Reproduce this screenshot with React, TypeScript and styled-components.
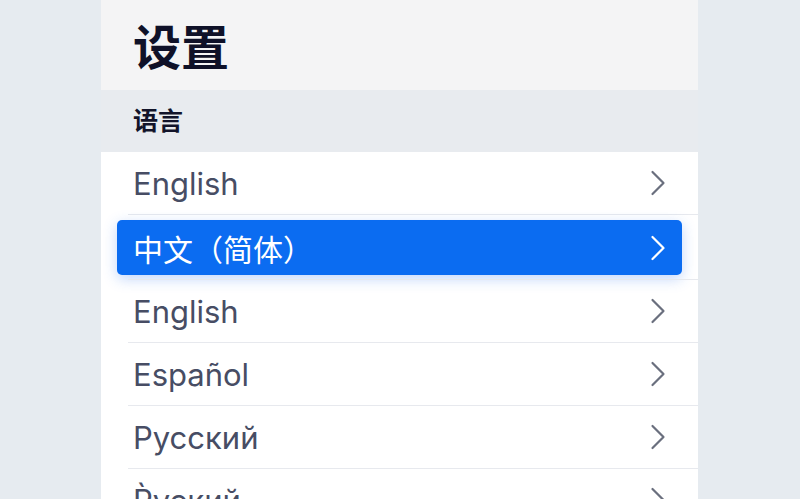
import React from 'react';
import styled, { createGlobalStyle } from 'styled-components';

const GlobalStyle = createGlobalStyle`
  html, body {
    margin: 0;
    padding: 0;
    background: #e6ebf0;
    font-family: Inter, "Noto Sans", "Noto Sans CJK SC", sans-serif;
    overflow: hidden;
  }
`;

type Language = {
  label: string;
  selected?: boolean;
};

const languages: Language[] = [
  { label: 'English' },
  { label: '中文（简体）', selected: true },
  { label: 'English' },
  { label: 'Español' },
  { label: 'Русский' },
  { label: 'Р̀уский' },
];

const Chevron = ({ light }: { light?: boolean }) => (
  <ChevronSvg viewBox="0 0 16 26" fill="none">
    <path
      d="M2.5 2 L13.5 13 L2.5 24"
      stroke={light ? '#ffffff' : '#6a6f7e'}
      strokeWidth="2.2"
      strokeLinecap="round"
      strokeLinejoin="round"
    />
  </ChevronSvg>
);

export default function App() {
  return (
    <>
      <GlobalStyle />
      <Page>
        <Panel>
          <Header>
            <Title>设置</Title>
          </Header>
          <Section>
            <SectionTitle>语言</SectionTitle>
          </Section>
          <List>
            {languages.map((lang, i) =>
              lang.selected ? (
                <SelectedWrap key={i}>
                  <SelectedRow>
                    <SelectedLabel>{lang.label}</SelectedLabel>
                    <Chevron light />
                  </SelectedRow>
                </SelectedWrap>
              ) : (
                <Row key={i}>
                  <Label>{lang.label}</Label>
                  <Chevron />
                </Row>
              )
            )}
          </List>
        </Panel>
      </Page>
    </>
  );
}

const Page = styled.div`
  height: 499px;
  overflow: hidden;
  display: flex;
  padding-left: 101px;
`;

const Panel = styled.div`
  width: 597px;
  display: flex;
  flex-direction: column;
`;

const Header = styled.div`
  height: 90px;
  flex-shrink: 0;
  background: #f4f4f5;
  display: flex;
  align-items: center;
  padding-left: 32px;
`;

const Title = styled.h1`
  margin: 0;
  font-family: "Noto Sans CJK SC", sans-serif;
  font-weight: 700;
  font-size: 48px;
  line-height: 1;
  color: #0f1128;
  padding-bottom: 2px;
`;

const Section = styled.div`
  height: 62px;
  flex-shrink: 0;
  background: #e8ebef;
  display: flex;
  align-items: center;
  padding-left: 32px;
`;

const SectionTitle = styled.h2`
  margin: 0;
  font-family: "Noto Sans CJK SC", sans-serif;
  font-weight: 700;
  font-size: 25px;
  line-height: 1;
  color: #12142a;
  padding-bottom: 4px;
`;

const List = styled.div`
  background: #ffffff;
  flex: 1 0 auto;
  display: flex;
  flex-direction: column;
`;

const Row = styled.div`
  height: 63px;
  box-sizing: border-box;
  flex-shrink: 0;
  margin-left: 27px;
  padding: 0 32px 0 5px;
  display: flex;
  align-items: center;
  justify-content: space-between;
  border-bottom: 1px solid #e7e9ee;
`;

const Label = styled.span`
  font-family: Inter, "Noto Sans CJK SC", sans-serif;
  font-size: 31px;
  color: #474d64;
`;

const SelectedWrap = styled.div`
  height: 65px;
  flex-shrink: 0;
  padding: 5px 16px 5px 16px;
  box-sizing: border-box;
  display: flex;
  position: relative;
  &::after {
    content: '';
    position: absolute;
    left: 27px;
    right: 0;
    bottom: 0;
    height: 1px;
    background: #e7e9ee;
  }
`;

const SelectedRow = styled.div`
  flex: 1;
  background: #0b6cf1;
  border-radius: 5px;
  box-shadow: 0 4px 14px rgba(40, 110, 240, 0.28);
  display: flex;
  align-items: center;
  justify-content: space-between;
  padding: 0 16px 0 16px;
`;

const SelectedLabel = styled.span`
  font-family: "Noto Sans CJK SC", sans-serif;
  font-size: 30px;
  color: #ffffff;
  line-height: 1;
`;

const ChevronSvg = styled.svg`
  width: 16px;
  height: 26px;
  flex-shrink: 0;
`;
